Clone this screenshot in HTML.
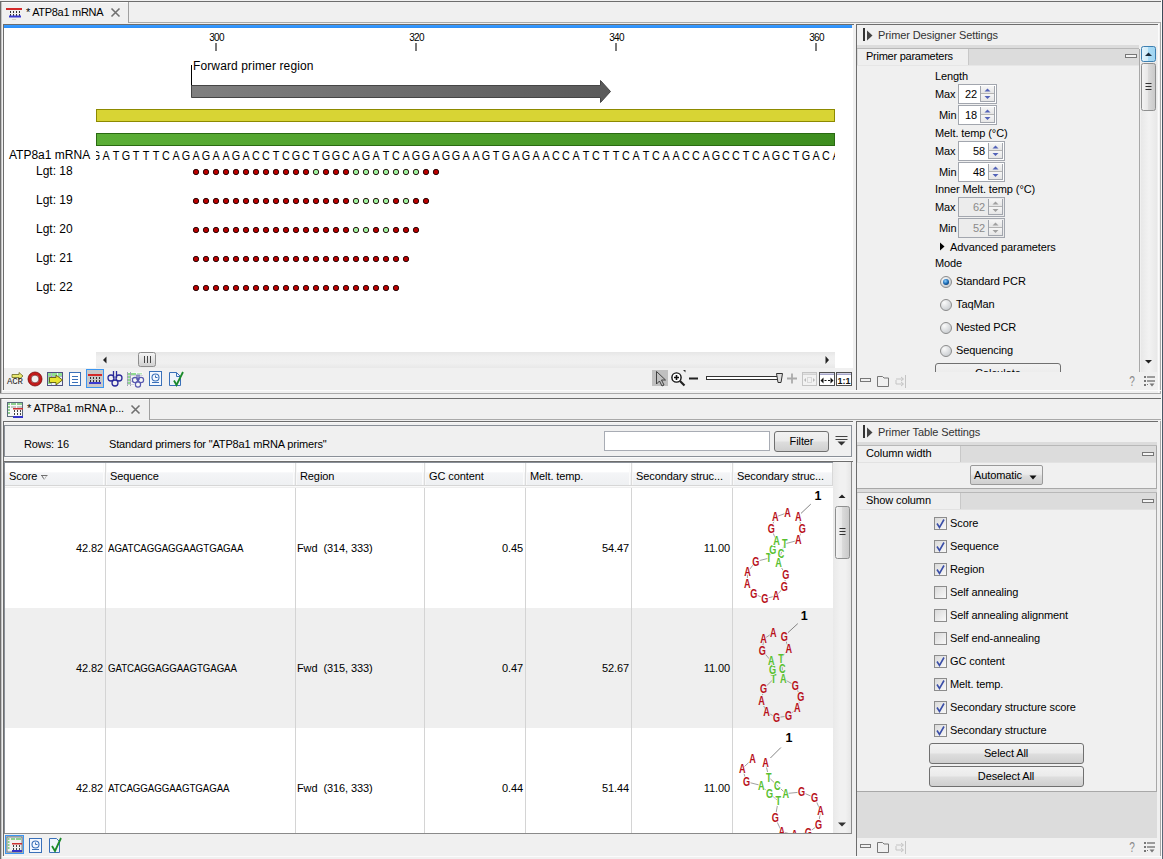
<!DOCTYPE html>
<html><head><meta charset="utf-8">
<style>
html,body{margin:0;padding:0}
body{width:1163px;height:859px;position:relative;overflow:hidden;background:#f0f0f0;font-family:"Liberation Sans", sans-serif}
.a{position:absolute}
.t{font-family:"Liberation Sans", sans-serif;line-height:1;white-space:pre}
svg{position:absolute;overflow:visible}
</style></head><body>
<div class="a" style="left:0px;top:1px;width:1161px;height:1px;background:#6d6d6d"></div>
<div class="a" style="left:0px;top:1px;width:1px;height:392px;background:#6d6d6d"></div>
<div class="a" style="left:1px;top:2px;width:1px;height:391px;background:#c4c4c4"></div>
<div class="a" style="left:1160px;top:22px;width:1px;height:371px;background:#a8a8a8"></div>
<div class="a" style="left:2px;top:2px;width:1159px;height:21px;background:#f0f0f0"></div>
<div class="a" style="left:129px;top:22px;width:1032px;height:1px;background:#a9a9a9"></div>
<div class="a" style="left:2px;top:2px;width:126px;height:22px;background:#f0f0f0"></div>
<div class="a" style="left:2px;top:2px;width:126px;height:1px;background:#fbfbfb"></div>
<div class="a" style="left:128px;top:2px;width:1px;height:21px;background:#a0a0a0"></div>
<div class="a" style="left:3px;top:24px;width:851px;height:1px;background:#6d6d6d"></div>
<div class="a" style="left:3px;top:24px;width:1px;height:366px;background:#6d6d6d"></div>
<div class="a" style="left:4px;top:25px;width:848px;height:3px;background:linear-gradient(#3a9cff,#2a8cf6)"></div>
<div class="a" style="left:4px;top:28px;width:849px;height:340px;background:#fff"></div>
<div class="a" style="left:856px;top:24px;width:302px;height:1px;background:#6d6d6d"></div>
<div class="a" style="left:856px;top:24px;width:1px;height:366px;background:#6d6d6d"></div>
<div class="a" style="left:1158px;top:24px;width:1px;height:369px;background:#fbfbfb"></div>
<div class="a" style="left:0px;top:393px;width:1162px;height:1px;background:#a9a9a9"></div>
<div class="a" style="left:2px;top:390px;width:1159px;height:1px;background:#fbfbfb"></div>
<div class="a" style="left:0px;top:398px;width:1161px;height:1px;background:#6d6d6d"></div>
<div class="a" style="left:0px;top:398px;width:1px;height:461px;background:#6d6d6d"></div>
<div class="a" style="left:1px;top:399px;width:1px;height:460px;background:#c4c4c4"></div>
<div class="a" style="left:1160px;top:419px;width:1px;height:438px;background:#a8a8a8"></div>
<div class="a" style="left:2px;top:399px;width:1159px;height:22px;background:#f0f0f0"></div>
<div class="a" style="left:2px;top:399px;width:147px;height:1px;background:#fbfbfb"></div>
<div class="a" style="left:149px;top:399px;width:1px;height:21px;background:#a0a0a0"></div>
<div class="a" style="left:150px;top:419px;width:1011px;height:1px;background:#a9a9a9"></div>
<div class="a" style="left:3px;top:421px;width:850px;height:1px;background:#6d6d6d"></div>
<div class="a" style="left:3px;top:421px;width:1px;height:435px;background:#6d6d6d"></div>
<div class="a" style="left:4px;top:422px;width:849px;height:1px;background:#f8f8f8"></div>
<div class="a" style="left:4px;top:425px;width:848px;height:1px;background:#8a9098"></div>
<div class="a" style="left:4px;top:425px;width:1px;height:32px;background:#8a9098"></div>
<div class="a" style="left:851px;top:425px;width:1px;height:32px;background:#8a9098"></div>
<div class="a" style="left:4px;top:456px;width:848px;height:1px;background:#8a9098"></div>
<div class="a" style="left:5px;top:457px;width:847px;height:1px;background:#fbfbfb"></div>
<div class="a" style="left:5px;top:460px;width:847px;height:1px;background:#fbfbfb"></div>
<div class="a" style="left:3px;top:461px;width:850px;height:1px;background:#6d6d6d"></div>
<div class="a" style="left:4px;top:462px;width:848px;height:1px;background:#8a9098"></div>
<div class="a" style="left:4px;top:462px;width:1px;height:372px;background:#8a9098"></div>
<div class="a" style="left:851px;top:462px;width:1px;height:372px;background:#8a8a8a"></div>
<div class="a" style="left:5px;top:463px;width:846px;height:370px;background:#fff"></div>
<div class="a" style="left:4px;top:833px;width:848px;height:1px;background:#8a8a8a"></div>
<div class="a" style="left:856px;top:421px;width:302px;height:1px;background:#6d6d6d"></div>
<div class="a" style="left:856px;top:421px;width:1px;height:435px;background:#6d6d6d"></div>
<div class="a" style="left:2px;top:856px;width:1159px;height:1px;background:#fbfbfb"></div>
<div class="a" style="left:1161px;top:0px;width:1px;height:859px;background:#fafafa"></div>
<div class="a" style="left:1162px;top:0px;width:1px;height:859px;background:linear-gradient(#3c4a58,#5a6878)"></div>
<svg style="left:5px;top:7px" width="18" height="14" viewBox="0 0 18 14">
<rect x="1" y="1" width="16" height="2" fill="#d42a2a"/>
<g fill="#333"><rect x="5" y="4" width="1" height="2"/><rect x="8" y="4" width="1" height="2"/><rect x="11" y="4" width="1" height="2"/><rect x="14" y="4" width="1" height="2"/>
<rect x="5" y="7" width="1" height="2"/><rect x="8" y="7" width="1" height="2"/><rect x="11" y="7" width="1" height="2"/><rect x="14" y="7" width="1" height="2"/></g>
<rect x="4" y="8.5" width="12" height="2" fill="#3a3ad0"/>
<rect x="7" y="12" width="4" height="1" fill="#d8d0c8"/>
</svg>
<div class="a t" style="top:6.69px;font-size:11px;color:#000;letter-spacing:-0.3px;left:26px;">* ATP8a1 mRNA</div>
<svg style="left:111px;top:8px" width="9" height="9" viewBox="0 0 9 9">
<path d="M0.5 0.5L8.5 8.5M8.5 0.5L0.5 8.5" stroke="#707070" stroke-width="1.6"/></svg>
<div class="a t" style="top:32.53px;font-size:10px;color:#000;letter-spacing:-0.7px;left:216.5px;transform:translateX(-50%);">300</div>
<div class="a" style="left:215px;top:43px;width:2px;height:8px;background:#7a7a7a"></div>
<div class="a t" style="top:32.53px;font-size:10px;color:#000;letter-spacing:-0.7px;left:416.5px;transform:translateX(-50%);">320</div>
<div class="a" style="left:415px;top:43px;width:2px;height:8px;background:#7a7a7a"></div>
<div class="a t" style="top:32.53px;font-size:10px;color:#000;letter-spacing:-0.7px;left:616.5px;transform:translateX(-50%);">340</div>
<div class="a" style="left:615px;top:43px;width:2px;height:8px;background:#7a7a7a"></div>
<div class="a t" style="top:32.53px;font-size:10px;color:#000;letter-spacing:-0.7px;left:816.5px;transform:translateX(-50%);">360</div>
<div class="a" style="left:815px;top:43px;width:2px;height:8px;background:#7a7a7a"></div>
<div class="a t" style="top:59.84px;font-size:12px;color:#000;letter-spacing:0.12px;left:193px;">Forward primer region</div>
<div class="a" style="left:191px;top:65px;width:1px;height:21px;background:#000"></div>
<svg style="left:190px;top:79px" width="24" height="26" viewBox="0 0 24 26"></svg>
<svg style="left:0;top:0" width="1163" height="400">
<defs><linearGradient id="ag" x1="0" x2="1" y1="0" y2="0"><stop offset="0" stop-color="#808080"/><stop offset="1" stop-color="#5a5a5a"/></linearGradient>
<linearGradient id="gg" x1="0" x2="1" y1="0" y2="0"><stop offset="0" stop-color="#5bae36"/><stop offset="1" stop-color="#3e8e1f"/></linearGradient></defs>
<path d="M191.5 85.5H600.5V80.5L610.5 91.5L600.5 102.5V97.5H191.5Z" fill="url(#ag)" stroke="#454545" stroke-width="1"/>
<rect x="96.5" y="109.5" width="738" height="12" fill="#d8d434" stroke="#8d8a00"/>
<rect x="96.5" y="133.5" width="738" height="12" fill="url(#gg)" stroke="#2a6a12"/>
</svg>
<div class="a t" style="top:148.84px;font-size:12px;color:#000;left:9px;">ATP8a1 mRNA</div>
<div class="a t" style="left:0;top:149.84px;width:1163px;height:16px;font-size:12px;"><div style="position:absolute;left:96px;top:0;width:739px;height:16px;overflow:hidden"><div style="position:absolute;left:-96px;top:0"><span style="position:absolute;left:96px;transform:translateX(-50%) scaleX(0.9)">G</span><span style="position:absolute;left:106px;transform:translateX(-50%) scaleX(0.9)">A</span><span style="position:absolute;left:116px;transform:translateX(-50%) scaleX(0.9)">T</span><span style="position:absolute;left:126px;transform:translateX(-50%) scaleX(0.9)">G</span><span style="position:absolute;left:136px;transform:translateX(-50%) scaleX(0.9)">T</span><span style="position:absolute;left:146px;transform:translateX(-50%) scaleX(0.9)">T</span><span style="position:absolute;left:156px;transform:translateX(-50%) scaleX(0.9)">T</span><span style="position:absolute;left:166px;transform:translateX(-50%) scaleX(0.9)">C</span><span style="position:absolute;left:176px;transform:translateX(-50%) scaleX(0.9)">A</span><span style="position:absolute;left:186px;transform:translateX(-50%) scaleX(0.9)">G</span><span style="position:absolute;left:196px;transform:translateX(-50%) scaleX(0.9)">A</span><span style="position:absolute;left:206px;transform:translateX(-50%) scaleX(0.9)">G</span><span style="position:absolute;left:216px;transform:translateX(-50%) scaleX(0.9)">A</span><span style="position:absolute;left:226px;transform:translateX(-50%) scaleX(0.9)">A</span><span style="position:absolute;left:236px;transform:translateX(-50%) scaleX(0.9)">G</span><span style="position:absolute;left:246px;transform:translateX(-50%) scaleX(0.9)">A</span><span style="position:absolute;left:256px;transform:translateX(-50%) scaleX(0.9)">C</span><span style="position:absolute;left:266px;transform:translateX(-50%) scaleX(0.9)">C</span><span style="position:absolute;left:276px;transform:translateX(-50%) scaleX(0.9)">T</span><span style="position:absolute;left:286px;transform:translateX(-50%) scaleX(0.9)">C</span><span style="position:absolute;left:296px;transform:translateX(-50%) scaleX(0.9)">G</span><span style="position:absolute;left:306px;transform:translateX(-50%) scaleX(0.9)">C</span><span style="position:absolute;left:316px;transform:translateX(-50%) scaleX(0.9)">T</span><span style="position:absolute;left:326px;transform:translateX(-50%) scaleX(0.9)">G</span><span style="position:absolute;left:336px;transform:translateX(-50%) scaleX(0.9)">G</span><span style="position:absolute;left:346px;transform:translateX(-50%) scaleX(0.9)">C</span><span style="position:absolute;left:356px;transform:translateX(-50%) scaleX(0.9)">A</span><span style="position:absolute;left:366px;transform:translateX(-50%) scaleX(0.9)">G</span><span style="position:absolute;left:376px;transform:translateX(-50%) scaleX(0.9)">A</span><span style="position:absolute;left:386px;transform:translateX(-50%) scaleX(0.9)">T</span><span style="position:absolute;left:396px;transform:translateX(-50%) scaleX(0.9)">C</span><span style="position:absolute;left:406px;transform:translateX(-50%) scaleX(0.9)">A</span><span style="position:absolute;left:416px;transform:translateX(-50%) scaleX(0.9)">G</span><span style="position:absolute;left:426px;transform:translateX(-50%) scaleX(0.9)">G</span><span style="position:absolute;left:436px;transform:translateX(-50%) scaleX(0.9)">A</span><span style="position:absolute;left:446px;transform:translateX(-50%) scaleX(0.9)">G</span><span style="position:absolute;left:456px;transform:translateX(-50%) scaleX(0.9)">G</span><span style="position:absolute;left:466px;transform:translateX(-50%) scaleX(0.9)">A</span><span style="position:absolute;left:476px;transform:translateX(-50%) scaleX(0.9)">A</span><span style="position:absolute;left:486px;transform:translateX(-50%) scaleX(0.9)">G</span><span style="position:absolute;left:496px;transform:translateX(-50%) scaleX(0.9)">T</span><span style="position:absolute;left:506px;transform:translateX(-50%) scaleX(0.9)">G</span><span style="position:absolute;left:516px;transform:translateX(-50%) scaleX(0.9)">A</span><span style="position:absolute;left:526px;transform:translateX(-50%) scaleX(0.9)">G</span><span style="position:absolute;left:536px;transform:translateX(-50%) scaleX(0.9)">A</span><span style="position:absolute;left:546px;transform:translateX(-50%) scaleX(0.9)">A</span><span style="position:absolute;left:556px;transform:translateX(-50%) scaleX(0.9)">C</span><span style="position:absolute;left:566px;transform:translateX(-50%) scaleX(0.9)">C</span><span style="position:absolute;left:576px;transform:translateX(-50%) scaleX(0.9)">A</span><span style="position:absolute;left:586px;transform:translateX(-50%) scaleX(0.9)">T</span><span style="position:absolute;left:596px;transform:translateX(-50%) scaleX(0.9)">C</span><span style="position:absolute;left:606px;transform:translateX(-50%) scaleX(0.9)">T</span><span style="position:absolute;left:616px;transform:translateX(-50%) scaleX(0.9)">T</span><span style="position:absolute;left:626px;transform:translateX(-50%) scaleX(0.9)">C</span><span style="position:absolute;left:636px;transform:translateX(-50%) scaleX(0.9)">A</span><span style="position:absolute;left:646px;transform:translateX(-50%) scaleX(0.9)">T</span><span style="position:absolute;left:656px;transform:translateX(-50%) scaleX(0.9)">C</span><span style="position:absolute;left:666px;transform:translateX(-50%) scaleX(0.9)">A</span><span style="position:absolute;left:676px;transform:translateX(-50%) scaleX(0.9)">A</span><span style="position:absolute;left:686px;transform:translateX(-50%) scaleX(0.9)">C</span><span style="position:absolute;left:696px;transform:translateX(-50%) scaleX(0.9)">C</span><span style="position:absolute;left:706px;transform:translateX(-50%) scaleX(0.9)">A</span><span style="position:absolute;left:716px;transform:translateX(-50%) scaleX(0.9)">G</span><span style="position:absolute;left:726px;transform:translateX(-50%) scaleX(0.9)">C</span><span style="position:absolute;left:736px;transform:translateX(-50%) scaleX(0.9)">C</span><span style="position:absolute;left:746px;transform:translateX(-50%) scaleX(0.9)">T</span><span style="position:absolute;left:756px;transform:translateX(-50%) scaleX(0.9)">C</span><span style="position:absolute;left:766px;transform:translateX(-50%) scaleX(0.9)">A</span><span style="position:absolute;left:776px;transform:translateX(-50%) scaleX(0.9)">G</span><span style="position:absolute;left:786px;transform:translateX(-50%) scaleX(0.9)">C</span><span style="position:absolute;left:796px;transform:translateX(-50%) scaleX(0.9)">T</span><span style="position:absolute;left:806px;transform:translateX(-50%) scaleX(0.9)">G</span><span style="position:absolute;left:816px;transform:translateX(-50%) scaleX(0.9)">A</span><span style="position:absolute;left:826px;transform:translateX(-50%) scaleX(0.9)">C</span><span style="position:absolute;left:836px;transform:translateX(-50%) scaleX(0.9)">A</span></div></div></div>
<div class="a t" style="top:164.84px;font-size:12px;color:#000;left:36px;">Lgt: 18</div>
<div class="a t" style="top:193.84px;font-size:12px;color:#000;left:36px;">Lgt: 19</div>
<div class="a t" style="top:222.84px;font-size:12px;color:#000;left:36px;">Lgt: 20</div>
<div class="a t" style="top:251.84px;font-size:12px;color:#000;left:36px;">Lgt: 21</div>
<div class="a t" style="top:280.84px;font-size:12px;color:#000;left:36px;">Lgt: 22</div>
<svg style="left:0;top:0" width="1163" height="400"><circle cx="196" cy="172" r="2.7" fill="#b80000" stroke="#1a0000" stroke-width="0.9"/><circle cx="206" cy="172" r="2.7" fill="#b80000" stroke="#1a0000" stroke-width="0.9"/><circle cx="216" cy="172" r="2.7" fill="#b80000" stroke="#1a0000" stroke-width="0.9"/><circle cx="226" cy="172" r="2.7" fill="#b80000" stroke="#1a0000" stroke-width="0.9"/><circle cx="236" cy="172" r="2.7" fill="#b80000" stroke="#1a0000" stroke-width="0.9"/><circle cx="246" cy="172" r="2.7" fill="#b80000" stroke="#1a0000" stroke-width="0.9"/><circle cx="256" cy="172" r="2.7" fill="#b80000" stroke="#1a0000" stroke-width="0.9"/><circle cx="266" cy="172" r="2.7" fill="#b80000" stroke="#1a0000" stroke-width="0.9"/><circle cx="276" cy="172" r="2.7" fill="#b80000" stroke="#1a0000" stroke-width="0.9"/><circle cx="286" cy="172" r="2.7" fill="#b80000" stroke="#1a0000" stroke-width="0.9"/><circle cx="296" cy="172" r="2.7" fill="#b80000" stroke="#1a0000" stroke-width="0.9"/><circle cx="306" cy="172" r="2.7" fill="#b80000" stroke="#1a0000" stroke-width="0.9"/><circle cx="316" cy="172" r="2.7" fill="#9ef09e" stroke="#1a0000" stroke-width="0.9"/><circle cx="326" cy="172" r="2.7" fill="#b80000" stroke="#1a0000" stroke-width="0.9"/><circle cx="336" cy="172" r="2.7" fill="#b80000" stroke="#1a0000" stroke-width="0.9"/><circle cx="346" cy="172" r="2.7" fill="#b80000" stroke="#1a0000" stroke-width="0.9"/><circle cx="356" cy="172" r="2.7" fill="#9ef09e" stroke="#1a0000" stroke-width="0.9"/><circle cx="366" cy="172" r="2.7" fill="#9ef09e" stroke="#1a0000" stroke-width="0.9"/><circle cx="376" cy="172" r="2.7" fill="#9ef09e" stroke="#1a0000" stroke-width="0.9"/><circle cx="386" cy="172" r="2.7" fill="#9ef09e" stroke="#1a0000" stroke-width="0.9"/><circle cx="396" cy="172" r="2.7" fill="#9ef09e" stroke="#1a0000" stroke-width="0.9"/><circle cx="406" cy="172" r="2.7" fill="#9ef09e" stroke="#1a0000" stroke-width="0.9"/><circle cx="416" cy="172" r="2.7" fill="#9ef09e" stroke="#1a0000" stroke-width="0.9"/><circle cx="426" cy="172" r="2.7" fill="#b80000" stroke="#1a0000" stroke-width="0.9"/><circle cx="436" cy="172" r="2.7" fill="#b80000" stroke="#1a0000" stroke-width="0.9"/><circle cx="196" cy="201" r="2.7" fill="#b80000" stroke="#1a0000" stroke-width="0.9"/><circle cx="206" cy="201" r="2.7" fill="#b80000" stroke="#1a0000" stroke-width="0.9"/><circle cx="216" cy="201" r="2.7" fill="#b80000" stroke="#1a0000" stroke-width="0.9"/><circle cx="226" cy="201" r="2.7" fill="#b80000" stroke="#1a0000" stroke-width="0.9"/><circle cx="236" cy="201" r="2.7" fill="#b80000" stroke="#1a0000" stroke-width="0.9"/><circle cx="246" cy="201" r="2.7" fill="#b80000" stroke="#1a0000" stroke-width="0.9"/><circle cx="256" cy="201" r="2.7" fill="#b80000" stroke="#1a0000" stroke-width="0.9"/><circle cx="266" cy="201" r="2.7" fill="#b80000" stroke="#1a0000" stroke-width="0.9"/><circle cx="276" cy="201" r="2.7" fill="#b80000" stroke="#1a0000" stroke-width="0.9"/><circle cx="286" cy="201" r="2.7" fill="#b80000" stroke="#1a0000" stroke-width="0.9"/><circle cx="296" cy="201" r="2.7" fill="#b80000" stroke="#1a0000" stroke-width="0.9"/><circle cx="306" cy="201" r="2.7" fill="#b80000" stroke="#1a0000" stroke-width="0.9"/><circle cx="316" cy="201" r="2.7" fill="#b80000" stroke="#1a0000" stroke-width="0.9"/><circle cx="326" cy="201" r="2.7" fill="#b80000" stroke="#1a0000" stroke-width="0.9"/><circle cx="336" cy="201" r="2.7" fill="#b80000" stroke="#1a0000" stroke-width="0.9"/><circle cx="346" cy="201" r="2.7" fill="#b80000" stroke="#1a0000" stroke-width="0.9"/><circle cx="356" cy="201" r="2.7" fill="#9ef09e" stroke="#1a0000" stroke-width="0.9"/><circle cx="366" cy="201" r="2.7" fill="#9ef09e" stroke="#1a0000" stroke-width="0.9"/><circle cx="376" cy="201" r="2.7" fill="#9ef09e" stroke="#1a0000" stroke-width="0.9"/><circle cx="386" cy="201" r="2.7" fill="#9ef09e" stroke="#1a0000" stroke-width="0.9"/><circle cx="396" cy="201" r="2.7" fill="#b80000" stroke="#1a0000" stroke-width="0.9"/><circle cx="406" cy="201" r="2.7" fill="#9ef09e" stroke="#1a0000" stroke-width="0.9"/><circle cx="416" cy="201" r="2.7" fill="#b80000" stroke="#1a0000" stroke-width="0.9"/><circle cx="426" cy="201" r="2.7" fill="#b80000" stroke="#1a0000" stroke-width="0.9"/><circle cx="196" cy="230" r="2.7" fill="#b80000" stroke="#1a0000" stroke-width="0.9"/><circle cx="206" cy="230" r="2.7" fill="#b80000" stroke="#1a0000" stroke-width="0.9"/><circle cx="216" cy="230" r="2.7" fill="#b80000" stroke="#1a0000" stroke-width="0.9"/><circle cx="226" cy="230" r="2.7" fill="#b80000" stroke="#1a0000" stroke-width="0.9"/><circle cx="236" cy="230" r="2.7" fill="#b80000" stroke="#1a0000" stroke-width="0.9"/><circle cx="246" cy="230" r="2.7" fill="#b80000" stroke="#1a0000" stroke-width="0.9"/><circle cx="256" cy="230" r="2.7" fill="#b80000" stroke="#1a0000" stroke-width="0.9"/><circle cx="266" cy="230" r="2.7" fill="#b80000" stroke="#1a0000" stroke-width="0.9"/><circle cx="276" cy="230" r="2.7" fill="#b80000" stroke="#1a0000" stroke-width="0.9"/><circle cx="286" cy="230" r="2.7" fill="#b80000" stroke="#1a0000" stroke-width="0.9"/><circle cx="296" cy="230" r="2.7" fill="#b80000" stroke="#1a0000" stroke-width="0.9"/><circle cx="306" cy="230" r="2.7" fill="#b80000" stroke="#1a0000" stroke-width="0.9"/><circle cx="316" cy="230" r="2.7" fill="#b80000" stroke="#1a0000" stroke-width="0.9"/><circle cx="326" cy="230" r="2.7" fill="#b80000" stroke="#1a0000" stroke-width="0.9"/><circle cx="336" cy="230" r="2.7" fill="#b80000" stroke="#1a0000" stroke-width="0.9"/><circle cx="346" cy="230" r="2.7" fill="#b80000" stroke="#1a0000" stroke-width="0.9"/><circle cx="356" cy="230" r="2.7" fill="#9ef09e" stroke="#1a0000" stroke-width="0.9"/><circle cx="366" cy="230" r="2.7" fill="#9ef09e" stroke="#1a0000" stroke-width="0.9"/><circle cx="376" cy="230" r="2.7" fill="#b80000" stroke="#1a0000" stroke-width="0.9"/><circle cx="386" cy="230" r="2.7" fill="#9ef09e" stroke="#1a0000" stroke-width="0.9"/><circle cx="396" cy="230" r="2.7" fill="#b80000" stroke="#1a0000" stroke-width="0.9"/><circle cx="406" cy="230" r="2.7" fill="#b80000" stroke="#1a0000" stroke-width="0.9"/><circle cx="416" cy="230" r="2.7" fill="#b80000" stroke="#1a0000" stroke-width="0.9"/><circle cx="196" cy="259" r="2.7" fill="#b80000" stroke="#1a0000" stroke-width="0.9"/><circle cx="206" cy="259" r="2.7" fill="#b80000" stroke="#1a0000" stroke-width="0.9"/><circle cx="216" cy="259" r="2.7" fill="#b80000" stroke="#1a0000" stroke-width="0.9"/><circle cx="226" cy="259" r="2.7" fill="#b80000" stroke="#1a0000" stroke-width="0.9"/><circle cx="236" cy="259" r="2.7" fill="#b80000" stroke="#1a0000" stroke-width="0.9"/><circle cx="246" cy="259" r="2.7" fill="#b80000" stroke="#1a0000" stroke-width="0.9"/><circle cx="256" cy="259" r="2.7" fill="#b80000" stroke="#1a0000" stroke-width="0.9"/><circle cx="266" cy="259" r="2.7" fill="#b80000" stroke="#1a0000" stroke-width="0.9"/><circle cx="276" cy="259" r="2.7" fill="#b80000" stroke="#1a0000" stroke-width="0.9"/><circle cx="286" cy="259" r="2.7" fill="#b80000" stroke="#1a0000" stroke-width="0.9"/><circle cx="296" cy="259" r="2.7" fill="#b80000" stroke="#1a0000" stroke-width="0.9"/><circle cx="306" cy="259" r="2.7" fill="#b80000" stroke="#1a0000" stroke-width="0.9"/><circle cx="316" cy="259" r="2.7" fill="#b80000" stroke="#1a0000" stroke-width="0.9"/><circle cx="326" cy="259" r="2.7" fill="#b80000" stroke="#1a0000" stroke-width="0.9"/><circle cx="336" cy="259" r="2.7" fill="#b80000" stroke="#1a0000" stroke-width="0.9"/><circle cx="346" cy="259" r="2.7" fill="#b80000" stroke="#1a0000" stroke-width="0.9"/><circle cx="356" cy="259" r="2.7" fill="#b80000" stroke="#1a0000" stroke-width="0.9"/><circle cx="366" cy="259" r="2.7" fill="#b80000" stroke="#1a0000" stroke-width="0.9"/><circle cx="376" cy="259" r="2.7" fill="#b80000" stroke="#1a0000" stroke-width="0.9"/><circle cx="386" cy="259" r="2.7" fill="#b80000" stroke="#1a0000" stroke-width="0.9"/><circle cx="396" cy="259" r="2.7" fill="#b80000" stroke="#1a0000" stroke-width="0.9"/><circle cx="406" cy="259" r="2.7" fill="#b80000" stroke="#1a0000" stroke-width="0.9"/><circle cx="196" cy="288" r="2.7" fill="#b80000" stroke="#1a0000" stroke-width="0.9"/><circle cx="206" cy="288" r="2.7" fill="#b80000" stroke="#1a0000" stroke-width="0.9"/><circle cx="216" cy="288" r="2.7" fill="#b80000" stroke="#1a0000" stroke-width="0.9"/><circle cx="226" cy="288" r="2.7" fill="#b80000" stroke="#1a0000" stroke-width="0.9"/><circle cx="236" cy="288" r="2.7" fill="#b80000" stroke="#1a0000" stroke-width="0.9"/><circle cx="246" cy="288" r="2.7" fill="#b80000" stroke="#1a0000" stroke-width="0.9"/><circle cx="256" cy="288" r="2.7" fill="#b80000" stroke="#1a0000" stroke-width="0.9"/><circle cx="266" cy="288" r="2.7" fill="#b80000" stroke="#1a0000" stroke-width="0.9"/><circle cx="276" cy="288" r="2.7" fill="#b80000" stroke="#1a0000" stroke-width="0.9"/><circle cx="286" cy="288" r="2.7" fill="#b80000" stroke="#1a0000" stroke-width="0.9"/><circle cx="296" cy="288" r="2.7" fill="#b80000" stroke="#1a0000" stroke-width="0.9"/><circle cx="306" cy="288" r="2.7" fill="#b80000" stroke="#1a0000" stroke-width="0.9"/><circle cx="316" cy="288" r="2.7" fill="#b80000" stroke="#1a0000" stroke-width="0.9"/><circle cx="326" cy="288" r="2.7" fill="#b80000" stroke="#1a0000" stroke-width="0.9"/><circle cx="336" cy="288" r="2.7" fill="#b80000" stroke="#1a0000" stroke-width="0.9"/><circle cx="346" cy="288" r="2.7" fill="#b80000" stroke="#1a0000" stroke-width="0.9"/><circle cx="356" cy="288" r="2.7" fill="#b80000" stroke="#1a0000" stroke-width="0.9"/><circle cx="366" cy="288" r="2.7" fill="#b80000" stroke="#1a0000" stroke-width="0.9"/><circle cx="376" cy="288" r="2.7" fill="#b80000" stroke="#1a0000" stroke-width="0.9"/><circle cx="386" cy="288" r="2.7" fill="#b80000" stroke="#1a0000" stroke-width="0.9"/><circle cx="396" cy="288" r="2.7" fill="#b80000" stroke="#1a0000" stroke-width="0.9"/></svg>
<div class="a" style="left:96px;top:352px;width:739px;height:16px;background:linear-gradient(#e6e6e6,#efefef 30%,#f0f0f0 70%,#e8e8e8)"></div>
<svg style="left:96px;top:352px" width="740" height="16" viewBox="0 0 740 16">
<path d="M7 8L10.5 4.5V11.5Z" fill="#222"/>
<path d="M733 8L729.5 4V12Z" fill="#222"/>
<rect x="42.5" y="0.5" width="17" height="14" rx="2" fill="url(#thg)" stroke="#8e8e8e"/>
<defs><linearGradient id="thg" x1="0" x2="0" y1="0" y2="1"><stop offset="0" stop-color="#f4f4f4"/><stop offset="0.5" stop-color="#e4e4e4"/><stop offset="1" stop-color="#cfcfcf"/></linearGradient></defs>
<g fill="#444"><rect x="48" y="4" width="1" height="7"/><rect x="51" y="4" width="1" height="7"/><rect x="54" y="4" width="1" height="7"/></g>
</svg>
<svg style="left:4px;top:368px" width="200" height="22" viewBox="0 0 200 22">
<path d="M8 6.5H15V4.5L19 8L15 11.5V9.5H8Z" fill="#e8e870" stroke="#6a6a20" stroke-width="0.8"/>
<text x="3" y="16" font-family="Liberation Mono" font-size="9" fill="#222" letter-spacing="-0.2">ACR</text>
<circle cx="31" cy="11" r="5.6" fill="none" stroke="#c41a1a" stroke-width="3"/>
<circle cx="31" cy="11" r="7" fill="none" stroke="#7a1010" stroke-width="0.8"/>
<circle cx="31" cy="11" r="3.9" fill="none" stroke="#6a1010" stroke-width="0.7"/>
<rect x="43.5" y="4.5" width="15" height="13" fill="#eef4fa" stroke="#505080"/>
<g fill="#90e090"><rect x="44" y="5" width="3" height="3"/><rect x="48" y="5" width="5" height="3"/><rect x="54" y="5" width="4" height="3"/><rect x="44" y="9" width="3" height="3"/><rect x="44" y="13" width="3" height="3"/></g>
<path d="M44 8.5H58M44 12.5H58M47.5 5V17" stroke="#8888aa" stroke-width="0.6"/>
<path d="M45.5 9.5H52V7L58.5 12L52 17V14.5H45.5Z" fill="#e8e430" stroke="#5a5a10" stroke-width="0.9"/>
<rect x="65.5" y="4.5" width="11" height="13" fill="#fff" stroke="#3a70b8"/>
<g stroke="#3a70b8"><path d="M68 8.5H74M68 11.5H74M68 14.5H74"/></g>
<rect x="82.5" y="1.5" width="17" height="18" fill="#c8c8c8" stroke="#3c96f0"/>
<rect x="84" y="6" width="14" height="2" fill="#d42a2a"/>
<g fill="#333"><rect x="86" y="9" width="1" height="2"/><rect x="89" y="9" width="1" height="2"/><rect x="92" y="9" width="1" height="2"/><rect x="95" y="9" width="1" height="2"/><rect x="86" y="12" width="1" height="2"/><rect x="89" y="12" width="1" height="2"/><rect x="92" y="12" width="1" height="2"/><rect x="95" y="12" width="1" height="2"/></g>
<rect x="85" y="14" width="12" height="2" fill="#3a3ad0"/>
<g fill="none" stroke="#2a2a9a" stroke-width="1.3"><circle cx="107" cy="10" r="3"/><circle cx="115" cy="10" r="3"/><circle cx="111" cy="15" r="3"/><path d="M109.5 3V10M112.5 3V10"/></g>
<rect x="123" y="4" width="16" height="14" fill="#f6f8f6"/>
<g fill="#8fd88f"><rect x="124" y="5" width="2" height="2"/><rect x="124" y="8" width="2" height="2"/><rect x="124" y="11" width="2" height="2"/><rect x="124" y="14" width="2" height="2"/><rect x="127" y="5" width="5" height="2"/><rect x="133" y="5" width="5" height="1.5" opacity="0.6"/></g>
<path d="M123.5 4V18M126.5 4V18" stroke="#7a7a9a" stroke-width="0.7"/><path d="M123 7.5H139M123 10.5H133M123 13.5H130M123 16.5H130" stroke="#c0c0d0" stroke-width="0.7"/>
<g fill="none" stroke="#5a5ab0" stroke-width="1.2"><circle cx="131" cy="12" r="2.6"/><circle cx="137" cy="12" r="2.6"/><circle cx="134" cy="16.5" r="2.6"/><path d="M133 6.5V12M135 6.5V12"/></g>
<rect x="145.5" y="3.5" width="12" height="14" fill="#f4f8ff" stroke="#3a70b8"/>
<circle cx="151.5" cy="9.5" r="3.5" fill="none" stroke="#3a70b8" stroke-width="1.1"/><path d="M151.5 7.5V9.5H153.5" fill="none" stroke="#3a70b8"/>
<path d="M148 14.5H155" stroke="#3a70b8"/>
<path d="M165.5 4.5H172.5L176.5 8.5V17.5H165.5Z" fill="#eef4fb" stroke="#3a70b8"/><path d="M172.5 4.5V8.5H176.5" fill="none" stroke="#3a70b8"/>
<path d="M170 12.5L172.5 17L179 4" fill="none" stroke="#1a8a2a" stroke-width="1.8"/>
</svg>
<svg style="left:650px;top:368px" width="205" height="22" viewBox="0 0 205 22">
<rect x="2" y="2" width="16" height="16" fill="#c0c0c0"/>
<path d="M6.5 3.5V16L9.5 13L12 18L14 17L11.5 12H15.5Z" fill="none" stroke="#333" stroke-width="0.9"/>
<circle cx="26.5" cy="9.5" r="4.6" fill="#fff" stroke="#111" stroke-width="1.4"/>
<path d="M24 9.5H29M26.5 7V12" stroke="#111" stroke-width="1.6"/>
<path d="M30 13L34.5 17.5" stroke="#222" stroke-width="2.2"/>
<path d="M33 2H35.5V4.5Z" fill="#333"/>
<path d="M39 10.5H48" stroke="#222" stroke-width="2"/>
<rect x="56.5" y="8.5" width="74" height="3" fill="#fff" stroke="#333"/>
<path d="M126.5 5.5H132.5L131 14.5H128Z" fill="#ddd" stroke="#333"/>
<path d="M137 10.5H147M142 5.5V15.5" stroke="#aaa" stroke-width="1.8"/>
<rect x="152.5" y="4.5" width="14" height="13" fill="#f2f2f2" stroke="#c4c4c4"/><path d="M153 6.2H166" stroke="#d0d0d0" stroke-width="1.4"/>
<path d="M154 12L156 10V14Z M165 12L163 10V14Z" fill="#b8b8b8"/><rect x="157.5" y="9.5" width="4" height="5" fill="none" stroke="#c0c0c0" stroke-dasharray="1 1"/>
<rect x="169.5" y="4.5" width="15" height="13" fill="#fff" stroke="#505050"/><path d="M170 6.2H184" stroke="#9c9cc4" stroke-width="1.4"/>
<path d="M170.5 12.5L173.5 9.5V15.5Z M183.5 12.5L180.5 9.5V15.5Z" fill="#111"/><path d="M174.5 12.5H176.5M178 12.5H180" stroke="#111" stroke-width="1.1"/>
<rect x="186.5" y="4.5" width="15" height="13" fill="#fff" stroke="#505050"/><path d="M187 6.2H201" stroke="#9c9cc4" stroke-width="1.4"/>
<text x="194" y="16" text-anchor="middle" font-family="Liberation Sans" font-weight="bold" font-size="9" fill="#111">1:1</text>
</svg>
<div class="a" style="left:857px;top:25px;width:301px;height:20px;background:#f0f0f0"></div>
<div class="a" style="left:863px;top:28px;width:2px;height:13px;background:#333"></div>
<svg style="left:866px;top:30px" width="8" height="12" viewBox="0 0 8 12"><path d="M1 0.5L6.5 5.5L1 10.5Z" fill="#444"/></svg>
<div class="a t" style="top:29.69px;font-size:11px;color:#333;letter-spacing:-0.1px;left:878px;">Primer Designer Settings</div>
<div class="a" style="left:857px;top:45px;width:282px;height:4px;background:#dcdcdc"></div>
<div class="a" style="left:857px;top:48px;width:282px;height:1px;background:#b8b8b8"></div>
<div class="a" style="left:857px;top:49px;width:282px;height:16px;background:#dcdcdc"></div>
<div class="a" style="left:858px;top:49px;width:110px;height:16px;background:#efefef"></div>
<div class="a" style="left:968px;top:49px;width:1px;height:16px;background:#c8c8c8"></div>
<div class="a" style="left:857px;top:65px;width:283px;height:1px;background:#e6e6e6"></div>
<div class="a t" style="top:51.19px;font-size:11px;color:#000;letter-spacing:-0.25px;left:866px;">Primer parameters</div>
<svg style="left:1124px;top:54px" width="14" height="5" viewBox="0 0 14 5"><rect x="1.5" y="0.5" width="11" height="3" fill="#f4f4f4" stroke="#777"/></svg>
<div class="a" style="left:1139px;top:49px;width:1px;height:323px;background:#a8a8a8"></div>
<div class="a t" style="top:70.69px;font-size:11px;color:#000;letter-spacing:-0.1px;left:935px;">Length</div>
<div class="a t" style="top:88.69px;font-size:11px;color:#000;letter-spacing:-0.1px;left:935px;">Max</div>
<div class="a" style="left:958px;top:84px;width:39px;height:20px;background:#fff;border:1px solid #a2a6ae;box-sizing:border-box"></div>
<div class="a" style="left:980px;top:86px;width:1px;height:16px;background:#a2a6ae"></div>
<div class="a" style="left:994px;top:86px;width:1px;height:16px;background:#a2a6ae"></div>
<div class="a" style="left:981px;top:86px;width:13px;height:7px;background:linear-gradient(#f6f6f6,#e6e6e6)"></div>
<div class="a" style="left:981px;top:93px;width:13px;height:1px;background:#b4b4b4"></div>
<div class="a" style="left:981px;top:94px;width:13px;height:7px;background:linear-gradient(#f6f6f6,#e6e6e6)"></div>
<div class="a" style="left:980px;top:101px;width:15px;height:1px;background:#a2a6ae"></div>
<svg style="left:981px;top:86px" width="13" height="15" viewBox="0 0 13 15"><path d="M3.5 5.5L6.5 2.5L9.5 5.5Z" fill="#5262b8"/><path d="M3.5 10L6.5 13L9.5 10Z" fill="#5262b8"/></svg>
<div class="a t" style="top:88.69px;font-size:11px;color:#000;letter-spacing:-0.1px;right:186px;text-align:right;">22</div>
<div class="a t" style="top:109.69px;font-size:11px;color:#000;letter-spacing:-0.1px;left:939px;">Min</div>
<div class="a" style="left:958px;top:105px;width:39px;height:20px;background:#fff;border:1px solid #a2a6ae;box-sizing:border-box"></div>
<div class="a" style="left:980px;top:107px;width:1px;height:16px;background:#a2a6ae"></div>
<div class="a" style="left:994px;top:107px;width:1px;height:16px;background:#a2a6ae"></div>
<div class="a" style="left:981px;top:107px;width:13px;height:7px;background:linear-gradient(#f6f6f6,#e6e6e6)"></div>
<div class="a" style="left:981px;top:114px;width:13px;height:1px;background:#b4b4b4"></div>
<div class="a" style="left:981px;top:115px;width:13px;height:7px;background:linear-gradient(#f6f6f6,#e6e6e6)"></div>
<div class="a" style="left:980px;top:122px;width:15px;height:1px;background:#a2a6ae"></div>
<svg style="left:981px;top:107px" width="13" height="15" viewBox="0 0 13 15"><path d="M3.5 5.5L6.5 2.5L9.5 5.5Z" fill="#5262b8"/><path d="M3.5 10L6.5 13L9.5 10Z" fill="#5262b8"/></svg>
<div class="a t" style="top:109.69px;font-size:11px;color:#000;letter-spacing:-0.1px;right:186px;text-align:right;">18</div>
<div class="a t" style="top:127.69px;font-size:11px;color:#000;letter-spacing:-0.1px;left:935px;">Melt. temp (°C)</div>
<div class="a t" style="top:145.69px;font-size:11px;color:#000;letter-spacing:-0.1px;left:935px;">Max</div>
<div class="a" style="left:958px;top:141px;width:47px;height:20px;background:#fff;border:1px solid #a2a6ae;box-sizing:border-box"></div>
<div class="a" style="left:988px;top:143px;width:1px;height:16px;background:#a2a6ae"></div>
<div class="a" style="left:1002px;top:143px;width:1px;height:16px;background:#a2a6ae"></div>
<div class="a" style="left:989px;top:143px;width:13px;height:7px;background:linear-gradient(#f6f6f6,#e6e6e6)"></div>
<div class="a" style="left:989px;top:150px;width:13px;height:1px;background:#b4b4b4"></div>
<div class="a" style="left:989px;top:151px;width:13px;height:7px;background:linear-gradient(#f6f6f6,#e6e6e6)"></div>
<div class="a" style="left:988px;top:158px;width:15px;height:1px;background:#a2a6ae"></div>
<svg style="left:989px;top:143px" width="13" height="15" viewBox="0 0 13 15"><path d="M3.5 5.5L6.5 2.5L9.5 5.5Z" fill="#5262b8"/><path d="M3.5 10L6.5 13L9.5 10Z" fill="#5262b8"/></svg>
<div class="a t" style="top:145.69px;font-size:11px;color:#000;letter-spacing:-0.1px;right:178px;text-align:right;">58</div>
<div class="a t" style="top:166.69px;font-size:11px;color:#000;letter-spacing:-0.1px;left:939px;">Min</div>
<div class="a" style="left:958px;top:162px;width:47px;height:20px;background:#fff;border:1px solid #a2a6ae;box-sizing:border-box"></div>
<div class="a" style="left:988px;top:164px;width:1px;height:16px;background:#a2a6ae"></div>
<div class="a" style="left:1002px;top:164px;width:1px;height:16px;background:#a2a6ae"></div>
<div class="a" style="left:989px;top:164px;width:13px;height:7px;background:linear-gradient(#f6f6f6,#e6e6e6)"></div>
<div class="a" style="left:989px;top:171px;width:13px;height:1px;background:#b4b4b4"></div>
<div class="a" style="left:989px;top:172px;width:13px;height:7px;background:linear-gradient(#f6f6f6,#e6e6e6)"></div>
<div class="a" style="left:988px;top:179px;width:15px;height:1px;background:#a2a6ae"></div>
<svg style="left:989px;top:164px" width="13" height="15" viewBox="0 0 13 15"><path d="M3.5 5.5L6.5 2.5L9.5 5.5Z" fill="#5262b8"/><path d="M3.5 10L6.5 13L9.5 10Z" fill="#5262b8"/></svg>
<div class="a t" style="top:166.69px;font-size:11px;color:#000;letter-spacing:-0.1px;right:178px;text-align:right;">48</div>
<div class="a t" style="top:183.69px;font-size:11px;color:#000;letter-spacing:-0.1px;left:935px;">Inner Melt. temp (°C)</div>
<div class="a t" style="top:201.69px;font-size:11px;color:#000;letter-spacing:-0.1px;left:935px;">Max</div>
<div class="a" style="left:958px;top:197px;width:47px;height:20px;background:#ececec;border:1px solid #a2a6ae;box-sizing:border-box"></div>
<div class="a" style="left:988px;top:199px;width:1px;height:16px;background:#a2a6ae"></div>
<div class="a" style="left:1002px;top:199px;width:1px;height:16px;background:#a2a6ae"></div>
<div class="a" style="left:989px;top:199px;width:13px;height:7px;background:linear-gradient(#f6f6f6,#e6e6e6)"></div>
<div class="a" style="left:989px;top:206px;width:13px;height:1px;background:#b4b4b4"></div>
<div class="a" style="left:989px;top:207px;width:13px;height:7px;background:linear-gradient(#f6f6f6,#e6e6e6)"></div>
<div class="a" style="left:988px;top:214px;width:15px;height:1px;background:#a2a6ae"></div>
<svg style="left:989px;top:199px" width="13" height="15" viewBox="0 0 13 15"><path d="M3.5 5.5L6.5 2.5L9.5 5.5Z" fill="#a0a0a0"/><path d="M3.5 10L6.5 13L9.5 10Z" fill="#a0a0a0"/></svg>
<div class="a t" style="top:201.69px;font-size:11px;color:#8a8a8a;letter-spacing:-0.1px;right:178px;text-align:right;">62</div>
<div class="a t" style="top:222.69px;font-size:11px;color:#000;letter-spacing:-0.1px;left:939px;">Min</div>
<div class="a" style="left:958px;top:218px;width:47px;height:20px;background:#ececec;border:1px solid #a2a6ae;box-sizing:border-box"></div>
<div class="a" style="left:988px;top:220px;width:1px;height:16px;background:#a2a6ae"></div>
<div class="a" style="left:1002px;top:220px;width:1px;height:16px;background:#a2a6ae"></div>
<div class="a" style="left:989px;top:220px;width:13px;height:7px;background:linear-gradient(#f6f6f6,#e6e6e6)"></div>
<div class="a" style="left:989px;top:227px;width:13px;height:1px;background:#b4b4b4"></div>
<div class="a" style="left:989px;top:228px;width:13px;height:7px;background:linear-gradient(#f6f6f6,#e6e6e6)"></div>
<div class="a" style="left:988px;top:235px;width:15px;height:1px;background:#a2a6ae"></div>
<svg style="left:989px;top:220px" width="13" height="15" viewBox="0 0 13 15"><path d="M3.5 5.5L6.5 2.5L9.5 5.5Z" fill="#a0a0a0"/><path d="M3.5 10L6.5 13L9.5 10Z" fill="#a0a0a0"/></svg>
<div class="a t" style="top:222.69px;font-size:11px;color:#8a8a8a;letter-spacing:-0.1px;right:178px;text-align:right;">52</div>
<svg style="left:939px;top:242px" width="7" height="10" viewBox="0 0 7 10"><path d="M1 0.5L5.5 4.5L1 8.5Z" fill="#000"/></svg>
<div class="a t" style="top:241.69px;font-size:11px;color:#000;letter-spacing:-0.1px;left:950px;">Advanced parameters</div>
<div class="a t" style="top:257.69px;font-size:11px;color:#000;letter-spacing:-0.1px;left:935px;">Mode</div>
<div class="a t" style="top:275.69px;font-size:11px;color:#000;letter-spacing:-0.1px;left:956px;">Standard PCR</div>
<div class="a t" style="top:298.69px;font-size:11px;color:#000;letter-spacing:-0.1px;left:956px;">TaqMan</div>
<div class="a t" style="top:321.69px;font-size:11px;color:#000;letter-spacing:-0.1px;left:956px;">Nested PCR</div>
<div class="a t" style="top:344.69px;font-size:11px;color:#000;letter-spacing:-0.1px;left:956px;">Sequencing</div>
<svg style="left:930px;top:270px" width="40" height="100" viewBox="0 0 40 100"><defs><radialGradient id="rg0" cx="0.35" cy="0.3" r="0.8"><stop offset="0" stop-color="#fafafa"/><stop offset="1" stop-color="#c4c8cc"/></radialGradient><radialGradient id="rg1" cx="0.4" cy="0.35" r="0.7"><stop offset="0" stop-color="#8fd0ff"/><stop offset="0.6" stop-color="#1f6fb8"/><stop offset="1" stop-color="#0a3a70"/></radialGradient></defs><circle cx="16" cy="12" r="5.5" fill="url(#rg0)" stroke="#8c8c8c"/><circle cx="16" cy="12" r="3" fill="url(#rg1)"/><circle cx="16" cy="35" r="5.5" fill="url(#rg0)" stroke="#8c8c8c"/><circle cx="16" cy="58" r="5.5" fill="url(#rg0)" stroke="#8c8c8c"/><circle cx="16" cy="81" r="5.5" fill="url(#rg0)" stroke="#8c8c8c"/></svg>
<div class="a" style="left:935px;top:363px;width:126px;height:9px;overflow:hidden"><div style="position:absolute;left:0;top:0;width:124px;height:20px;border:1px solid #707070;border-radius:3px;background:linear-gradient(#f2f2f2,#ebebeb 50%,#dddddd 50%,#cfcfcf)"></div><div class="t" style="position:absolute;left:0;width:126px;text-align:center;top:5px;font-size:11px">Calculate</div></div>
<div class="a" style="left:1141px;top:46px;width:16px;height:326px;background:linear-gradient(90deg,#e8e8e8,#f2f2f2 50%,#e8e8e8)"></div>
<svg style="left:1141px;top:45px" width="16" height="328" viewBox="0 0 16 328">
<defs><linearGradient id="ub" x1="0" x2="1"><stop offset="0" stop-color="#e4f4fc"/><stop offset="0.5" stop-color="#d0ebf8"/><stop offset="0.5" stop-color="#a9dbf6"/><stop offset="1" stop-color="#a0d4f0"/></linearGradient>
<linearGradient id="th2" x1="0" x2="1"><stop offset="0" stop-color="#f4f4f4"/><stop offset="0.5" stop-color="#e6e6e6"/><stop offset="0.5" stop-color="#dadada"/><stop offset="1" stop-color="#c8c8c8"/></linearGradient></defs>
<rect x="0.5" y="1.5" width="14" height="15" rx="2" fill="url(#ub)" stroke="#3c7fb1"/>
<path d="M4 11L7.5 7.5L11 11Z" fill="#1a2a3a"/>
<rect x="0.5" y="18.5" width="14" height="47" rx="2" fill="url(#th2)" stroke="#8e8f8f"/>
<g stroke="#333"><path d="M4.5 38.5H10.5M4.5 41.5H10.5M4.5 44.5H10.5"/></g>
<path d="M4 315L7.5 318.5L11 315Z" fill="#222"/>
</svg>
<svg style="left:857px;top:372px" width="301" height="18" viewBox="0 0 301 18">
<rect x="3.5" y="6.5" width="10" height="3" fill="none" stroke="#777"/>
<path d="M20.5 4.5H25.5L27 6H31.5V14.5H20.5Z" fill="none" stroke="#777"/>
<g stroke="#c4c4c4" fill="none"><path d="M39 7H46M44 5L46.5 7L44 9M39 8V12H46M44 10L46.5 12L44 14"/><path d="M48.5 3V16"/></g>
<text x="275" y="14.5" text-anchor="middle" font-family="Liberation Sans" font-size="14" fill="#8a8a8a" transform="translate(275 0) scale(0.72 1) translate(-275 0)">?</text>
<g fill="#777"><rect x="287" y="4" width="2" height="2"/><rect x="287" y="8" width="2" height="2"/><rect x="287" y="12" width="2" height="2"/><rect x="290" y="4.3" width="8" height="1.4"/><rect x="290" y="8.3" width="8" height="1.4"/><rect x="290" y="12" width="1" height="1"/><path d="M292.5 11.5H297.5L295 14.5Z"/></g>
</svg>
<svg style="left:6px;top:401px" width="19" height="17" viewBox="0 0 19 17">
<rect x="1.5" y="1.5" width="15" height="14" fill="#f8f8f8" stroke="#5a6a7a"/>
<g fill="#8fd08f"><rect x="2" y="2" width="2" height="2"/><rect x="5" y="2" width="5" height="2"/><rect x="11" y="2" width="5" height="2"/><rect x="2" y="5" width="2" height="2"/><rect x="2" y="8" width="2" height="2"/><rect x="2" y="11" width="2" height="2"/></g>
<g fill="#c8c8c8"><rect x="5" y="5" width="5" height="2"/><rect x="11" y="5" width="5" height="2"/></g>
<rect x="7" y="7" width="10" height="1.5" fill="#cc3030"/>
<g fill="#444"><rect x="8" y="9" width="1" height="2"/><rect x="11" y="9" width="1" height="2"/><rect x="14" y="9" width="1" height="2"/><rect x="8" y="12" width="1" height="2"/><rect x="11" y="12" width="1" height="2"/><rect x="14" y="12" width="1" height="2"/></g>
<rect x="7" y="15" width="10" height="2" fill="#3535c8"/>
</svg>
<div class="a t" style="top:403.19px;font-size:11px;color:#000;letter-spacing:-0.1px;left:27px;">* ATP8a1 mRNA p...</div>
<svg style="left:131px;top:405px" width="9" height="9" viewBox="0 0 9 9">
<path d="M0.5 0.5L8.5 8.5M8.5 0.5L0.5 8.5" stroke="#707070" stroke-width="1.6"/></svg>
<div class="a t" style="top:438.69px;font-size:11px;color:#000;letter-spacing:-0.1px;left:24px;">Rows: 16</div>
<div class="a t" style="top:438.69px;font-size:11px;color:#000;letter-spacing:-0.17px;left:109px;">Standard primers for "ATP8a1 mRNA primers"</div>
<div class="a" style="left:604px;top:431px;width:166px;height:20px;background:#fff;border:1px solid #a8acb4;box-sizing:border-box"></div>
<div class="a" style="left:774px;top:431px;width:55px;height:21px;box-sizing:border-box;border:1px solid #707070;border-radius:3px;background:linear-gradient(#f2f2f2,#ebebeb 45%,#dddddd 55%,#cfcfcf)"></div>
<div class="a t" style="top:436.19px;font-size:11px;color:#000;letter-spacing:-0.1px;left:801.5px;transform:translateX(-50%);">Filter</div>
<svg style="left:834px;top:434px" width="15" height="14" viewBox="0 0 15 14">
<path d="M1.5 2.5H13.5M1.5 5.5H13.5" stroke="#444" stroke-width="1.2"/><path d="M3.5 7.5H11.5L7.5 11.5Z" fill="#333"/></svg>
<div class="a" style="left:5px;top:463px;width:828px;height:22px;background:linear-gradient(#ffffff 0,#ffffff 40%,#f4f5f7 45%,#eef0f2)"></div>
<div class="a" style="left:5px;top:485px;width:828px;height:1px;background:#d6d6d6"></div>
<div class="a" style="left:5px;top:486px;width:828px;height:1px;background:#fafafa"></div>
<div class="a" style="left:5px;top:487px;width:828px;height:1px;background:#efefef"></div>
<div class="a" style="left:833px;top:462px;width:18px;height:371px;background:linear-gradient(90deg,#e9e9e9,#f1f1f1 40%,#f1f1f1 70%,#e6e6e6)"></div>
<div class="a" style="left:105px;top:463px;width:1px;height:22px;background:#dcdcdc"></div>
<div class="a" style="left:106px;top:463px;width:1px;height:22px;background:#f8f8f8"></div>
<div class="a" style="left:103px;top:463px;width:1px;height:22px;background:#fbfbfb"></div>
<div class="a" style="left:295px;top:463px;width:1px;height:22px;background:#dcdcdc"></div>
<div class="a" style="left:296px;top:463px;width:1px;height:22px;background:#f8f8f8"></div>
<div class="a" style="left:293px;top:463px;width:1px;height:22px;background:#fbfbfb"></div>
<div class="a" style="left:424px;top:463px;width:1px;height:22px;background:#dcdcdc"></div>
<div class="a" style="left:425px;top:463px;width:1px;height:22px;background:#f8f8f8"></div>
<div class="a" style="left:422px;top:463px;width:1px;height:22px;background:#fbfbfb"></div>
<div class="a" style="left:525px;top:463px;width:1px;height:22px;background:#dcdcdc"></div>
<div class="a" style="left:526px;top:463px;width:1px;height:22px;background:#f8f8f8"></div>
<div class="a" style="left:523px;top:463px;width:1px;height:22px;background:#fbfbfb"></div>
<div class="a" style="left:631px;top:463px;width:1px;height:22px;background:#dcdcdc"></div>
<div class="a" style="left:632px;top:463px;width:1px;height:22px;background:#f8f8f8"></div>
<div class="a" style="left:629px;top:463px;width:1px;height:22px;background:#fbfbfb"></div>
<div class="a" style="left:732px;top:463px;width:1px;height:22px;background:#dcdcdc"></div>
<div class="a" style="left:733px;top:463px;width:1px;height:22px;background:#f8f8f8"></div>
<div class="a" style="left:730px;top:463px;width:1px;height:22px;background:#fbfbfb"></div>
<div class="a" style="left:832px;top:463px;width:1px;height:23px;background:#d8d8d8"></div>
<div class="a t" style="top:470.69px;font-size:11px;color:#000;letter-spacing:-0.1px;left:9px;">Score</div>
<div class="a t" style="top:470.69px;font-size:11px;color:#000;letter-spacing:-0.1px;left:110px;">Sequence</div>
<div class="a t" style="top:470.69px;font-size:11px;color:#000;letter-spacing:-0.1px;left:300px;">Region</div>
<div class="a t" style="top:470.69px;font-size:11px;color:#000;letter-spacing:-0.1px;left:429px;">GC content</div>
<div class="a t" style="top:470.69px;font-size:11px;color:#000;letter-spacing:-0.1px;left:530px;">Melt. temp.</div>
<div class="a t" style="top:470.69px;font-size:11px;color:#000;letter-spacing:-0.1px;left:636px;">Secondary struc...</div>
<div class="a t" style="top:470.69px;font-size:11px;color:#000;letter-spacing:-0.1px;left:737px;">Secondary struc...</div>
<svg style="left:40px;top:474px" width="9" height="8" viewBox="0 0 9 8"><path d="M1 1.5H7.5" stroke="#707070" stroke-width="1"/><path d="M2 2L4.2 5.5L6.5 2" fill="none" stroke="#b0b0b0" stroke-width="0.9"/><path d="M2.3 2.2L3.5 4.5" stroke="#707070" stroke-width="0.9"/></svg>
<div class="a" style="left:5px;top:488px;width:828px;height:120px;background:#ffffff"></div>
<div class="a t" style="top:542.69px;font-size:11px;color:#000;letter-spacing:-0.1px;right:1060px;text-align:right;">42.82</div>
<div class="a t" style="top:542.69px;font-size:11px;color:#000;letter-spacing:-0.1px;left:108px;transform:scaleX(0.884);transform-origin:0 0;">AGATCAGGAGGAAGTGAGAA</div>
<div class="a t" style="top:542.69px;font-size:11px;color:#000;letter-spacing:-0.1px;left:297px;">Fwd  (314, 333)</div>
<div class="a t" style="top:542.69px;font-size:11px;color:#000;letter-spacing:-0.1px;right:640px;text-align:right;">0.45</div>
<div class="a t" style="top:542.69px;font-size:11px;color:#000;letter-spacing:-0.1px;right:534px;text-align:right;">54.47</div>
<div class="a t" style="top:542.69px;font-size:11px;color:#000;letter-spacing:-0.1px;right:433px;text-align:right;">11.00</div>
<div class="a" style="left:5px;top:608px;width:828px;height:120px;background:#efefef"></div>
<div class="a t" style="top:662.69px;font-size:11px;color:#000;letter-spacing:-0.1px;right:1060px;text-align:right;">42.82</div>
<div class="a t" style="top:662.69px;font-size:11px;color:#000;letter-spacing:-0.1px;left:108px;transform:scaleX(0.884);transform-origin:0 0;">GATCAGGAGGAAGTGAGAA</div>
<div class="a t" style="top:662.69px;font-size:11px;color:#000;letter-spacing:-0.1px;left:297px;">Fwd  (315, 333)</div>
<div class="a t" style="top:662.69px;font-size:11px;color:#000;letter-spacing:-0.1px;right:640px;text-align:right;">0.47</div>
<div class="a t" style="top:662.69px;font-size:11px;color:#000;letter-spacing:-0.1px;right:534px;text-align:right;">52.67</div>
<div class="a t" style="top:662.69px;font-size:11px;color:#000;letter-spacing:-0.1px;right:433px;text-align:right;">11.00</div>
<div class="a" style="left:5px;top:728px;width:828px;height:105px;background:#ffffff"></div>
<div class="a t" style="top:782.69px;font-size:11px;color:#000;letter-spacing:-0.1px;right:1060px;text-align:right;">42.82</div>
<div class="a t" style="top:782.69px;font-size:11px;color:#000;letter-spacing:-0.1px;left:108px;transform:scaleX(0.884);transform-origin:0 0;">ATCAGGAGGAAGTGAGAA</div>
<div class="a t" style="top:782.69px;font-size:11px;color:#000;letter-spacing:-0.1px;left:297px;">Fwd  (316, 333)</div>
<div class="a t" style="top:782.69px;font-size:11px;color:#000;letter-spacing:-0.1px;right:640px;text-align:right;">0.44</div>
<div class="a t" style="top:782.69px;font-size:11px;color:#000;letter-spacing:-0.1px;right:534px;text-align:right;">51.44</div>
<div class="a t" style="top:782.69px;font-size:11px;color:#000;letter-spacing:-0.1px;right:433px;text-align:right;">11.00</div>
<div class="a" style="left:105px;top:488px;width:1px;height:345px;background:#d4d4d4"></div>
<div class="a" style="left:295px;top:488px;width:1px;height:345px;background:#d4d4d4"></div>
<div class="a" style="left:424px;top:488px;width:1px;height:345px;background:#d4d4d4"></div>
<div class="a" style="left:525px;top:488px;width:1px;height:345px;background:#d4d4d4"></div>
<div class="a" style="left:631px;top:488px;width:1px;height:345px;background:#d4d4d4"></div>
<div class="a" style="left:732px;top:488px;width:1px;height:345px;background:#d4d4d4"></div>
<div class="a" style="left:733px;top:487px;width:100px;height:120px;overflow:hidden"><svg style="left:0;top:0" width="100" height="130" viewBox="733 487 100 130"><polyline points="798.2,516.7 802.3,528.6 798.2,540.3 784.7,543.9 781.0,553.6 778.5,563.1 785.8,574.5 784.4,586.7 776.1,596.0 764.7,598.6 753.8,593.6 747.2,583.4 747.6,572.0 755.7,561.5 768.8,558.2 772.8,550.1 776.6,541.1 771.2,528.6 775.3,517.1 787.5,512.6" fill="none" stroke="#888" stroke-width="0.8"/><line x1="810.8" y1="504.1" x2="801" y2="513.4" stroke="#777" stroke-width="0.9"/><text x="798.2" y="520.9" text-anchor="middle" font-family="Liberation Sans" font-weight="bold" font-size="12" fill="#b8101a" stroke="#ffffff" stroke-width="2.2" paint-order="stroke" transform="translate(798.2 0) scale(0.76 1) translate(-798.2 0)">A</text><text x="802.3" y="532.8" text-anchor="middle" font-family="Liberation Sans" font-weight="bold" font-size="12" fill="#b8101a" stroke="#ffffff" stroke-width="2.2" paint-order="stroke" transform="translate(802.3 0) scale(0.76 1) translate(-802.3 0)">G</text><text x="798.2" y="544.5" text-anchor="middle" font-family="Liberation Sans" font-weight="bold" font-size="12" fill="#b8101a" stroke="#ffffff" stroke-width="2.2" paint-order="stroke" transform="translate(798.2 0) scale(0.76 1) translate(-798.2 0)">A</text><text x="784.7" y="548.1" text-anchor="middle" font-family="Liberation Sans" font-weight="bold" font-size="12" fill="#58c030" stroke="#ffffff" stroke-width="2.2" paint-order="stroke" transform="translate(784.7 0) scale(0.76 1) translate(-784.7 0)">T</text><text x="781.0" y="557.8" text-anchor="middle" font-family="Liberation Sans" font-weight="bold" font-size="12" fill="#58c030" stroke="#ffffff" stroke-width="2.2" paint-order="stroke" transform="translate(781.0 0) scale(0.76 1) translate(-781.0 0)">C</text><text x="778.5" y="567.3" text-anchor="middle" font-family="Liberation Sans" font-weight="bold" font-size="12" fill="#58c030" stroke="#ffffff" stroke-width="2.2" paint-order="stroke" transform="translate(778.5 0) scale(0.76 1) translate(-778.5 0)">A</text><text x="785.8" y="578.7" text-anchor="middle" font-family="Liberation Sans" font-weight="bold" font-size="12" fill="#b8101a" stroke="#ffffff" stroke-width="2.2" paint-order="stroke" transform="translate(785.8 0) scale(0.76 1) translate(-785.8 0)">G</text><text x="784.4" y="590.9" text-anchor="middle" font-family="Liberation Sans" font-weight="bold" font-size="12" fill="#b8101a" stroke="#ffffff" stroke-width="2.2" paint-order="stroke" transform="translate(784.4 0) scale(0.76 1) translate(-784.4 0)">G</text><text x="776.1" y="600.2" text-anchor="middle" font-family="Liberation Sans" font-weight="bold" font-size="12" fill="#b8101a" stroke="#ffffff" stroke-width="2.2" paint-order="stroke" transform="translate(776.1 0) scale(0.76 1) translate(-776.1 0)">A</text><text x="764.7" y="602.8" text-anchor="middle" font-family="Liberation Sans" font-weight="bold" font-size="12" fill="#b8101a" stroke="#ffffff" stroke-width="2.2" paint-order="stroke" transform="translate(764.7 0) scale(0.76 1) translate(-764.7 0)">G</text><text x="753.8" y="597.8" text-anchor="middle" font-family="Liberation Sans" font-weight="bold" font-size="12" fill="#b8101a" stroke="#ffffff" stroke-width="2.2" paint-order="stroke" transform="translate(753.8 0) scale(0.76 1) translate(-753.8 0)">G</text><text x="747.2" y="587.6" text-anchor="middle" font-family="Liberation Sans" font-weight="bold" font-size="12" fill="#b8101a" stroke="#ffffff" stroke-width="2.2" paint-order="stroke" transform="translate(747.2 0) scale(0.76 1) translate(-747.2 0)">A</text><text x="747.6" y="576.2" text-anchor="middle" font-family="Liberation Sans" font-weight="bold" font-size="12" fill="#b8101a" stroke="#ffffff" stroke-width="2.2" paint-order="stroke" transform="translate(747.6 0) scale(0.76 1) translate(-747.6 0)">A</text><text x="755.7" y="565.7" text-anchor="middle" font-family="Liberation Sans" font-weight="bold" font-size="12" fill="#b8101a" stroke="#ffffff" stroke-width="2.2" paint-order="stroke" transform="translate(755.7 0) scale(0.76 1) translate(-755.7 0)">G</text><text x="768.8" y="562.4" text-anchor="middle" font-family="Liberation Sans" font-weight="bold" font-size="12" fill="#58c030" stroke="#ffffff" stroke-width="2.2" paint-order="stroke" transform="translate(768.8 0) scale(0.76 1) translate(-768.8 0)">T</text><text x="772.8" y="554.3" text-anchor="middle" font-family="Liberation Sans" font-weight="bold" font-size="12" fill="#58c030" stroke="#ffffff" stroke-width="2.2" paint-order="stroke" transform="translate(772.8 0) scale(0.76 1) translate(-772.8 0)">G</text><text x="776.6" y="545.3" text-anchor="middle" font-family="Liberation Sans" font-weight="bold" font-size="12" fill="#58c030" stroke="#ffffff" stroke-width="2.2" paint-order="stroke" transform="translate(776.6 0) scale(0.76 1) translate(-776.6 0)">A</text><text x="771.2" y="532.8" text-anchor="middle" font-family="Liberation Sans" font-weight="bold" font-size="12" fill="#b8101a" stroke="#ffffff" stroke-width="2.2" paint-order="stroke" transform="translate(771.2 0) scale(0.76 1) translate(-771.2 0)">G</text><text x="775.3" y="521.3" text-anchor="middle" font-family="Liberation Sans" font-weight="bold" font-size="12" fill="#b8101a" stroke="#ffffff" stroke-width="2.2" paint-order="stroke" transform="translate(775.3 0) scale(0.76 1) translate(-775.3 0)">A</text><text x="787.5" y="516.8" text-anchor="middle" font-family="Liberation Sans" font-weight="bold" font-size="12" fill="#b8101a" stroke="#ffffff" stroke-width="2.2" paint-order="stroke" transform="translate(787.5 0) scale(0.76 1) translate(-787.5 0)">A</text><text x="818" y="500.0" text-anchor="middle" font-family="Liberation Sans" font-weight="bold" font-size="12.5" fill="#000">1</text></svg></div>
<div class="a" style="left:733px;top:607px;width:100px;height:120px;overflow:hidden"><svg style="left:0;top:0" width="100" height="130" viewBox="733 607 100 130"><polyline points="784.4,637.1 788.8,648.4 781.0,658.7 782.3,669.2 783.4,679.0 795.3,685.5 800.7,697.0 797.4,707.9 788.5,716.0 776.6,717.6 766.5,712.1 761.6,701.0 763.5,688.8 773.6,679.0 772.5,670.0 771.2,661.1 762.4,650.8 763.5,639.1 773.3,632.6" fill="none" stroke="#888" stroke-width="0.8"/><line x1="797.8" y1="623.6" x2="788" y2="632.6" stroke="#777" stroke-width="0.9"/><text x="784.4" y="641.3" text-anchor="middle" font-family="Liberation Sans" font-weight="bold" font-size="12" fill="#b8101a" stroke="#efefef" stroke-width="2.2" paint-order="stroke" transform="translate(784.4 0) scale(0.76 1) translate(-784.4 0)">G</text><text x="788.8" y="652.6" text-anchor="middle" font-family="Liberation Sans" font-weight="bold" font-size="12" fill="#b8101a" stroke="#efefef" stroke-width="2.2" paint-order="stroke" transform="translate(788.8 0) scale(0.76 1) translate(-788.8 0)">A</text><text x="781.0" y="662.9" text-anchor="middle" font-family="Liberation Sans" font-weight="bold" font-size="12" fill="#58c030" stroke="#efefef" stroke-width="2.2" paint-order="stroke" transform="translate(781.0 0) scale(0.76 1) translate(-781.0 0)">T</text><text x="782.3" y="673.4" text-anchor="middle" font-family="Liberation Sans" font-weight="bold" font-size="12" fill="#58c030" stroke="#efefef" stroke-width="2.2" paint-order="stroke" transform="translate(782.3 0) scale(0.76 1) translate(-782.3 0)">C</text><text x="783.4" y="683.2" text-anchor="middle" font-family="Liberation Sans" font-weight="bold" font-size="12" fill="#58c030" stroke="#efefef" stroke-width="2.2" paint-order="stroke" transform="translate(783.4 0) scale(0.76 1) translate(-783.4 0)">A</text><text x="795.3" y="689.7" text-anchor="middle" font-family="Liberation Sans" font-weight="bold" font-size="12" fill="#b8101a" stroke="#efefef" stroke-width="2.2" paint-order="stroke" transform="translate(795.3 0) scale(0.76 1) translate(-795.3 0)">G</text><text x="800.7" y="701.2" text-anchor="middle" font-family="Liberation Sans" font-weight="bold" font-size="12" fill="#b8101a" stroke="#efefef" stroke-width="2.2" paint-order="stroke" transform="translate(800.7 0) scale(0.76 1) translate(-800.7 0)">G</text><text x="797.4" y="712.1" text-anchor="middle" font-family="Liberation Sans" font-weight="bold" font-size="12" fill="#b8101a" stroke="#efefef" stroke-width="2.2" paint-order="stroke" transform="translate(797.4 0) scale(0.76 1) translate(-797.4 0)">A</text><text x="788.5" y="720.2" text-anchor="middle" font-family="Liberation Sans" font-weight="bold" font-size="12" fill="#b8101a" stroke="#efefef" stroke-width="2.2" paint-order="stroke" transform="translate(788.5 0) scale(0.76 1) translate(-788.5 0)">G</text><text x="776.6" y="721.8" text-anchor="middle" font-family="Liberation Sans" font-weight="bold" font-size="12" fill="#b8101a" stroke="#efefef" stroke-width="2.2" paint-order="stroke" transform="translate(776.6 0) scale(0.76 1) translate(-776.6 0)">G</text><text x="766.5" y="716.3" text-anchor="middle" font-family="Liberation Sans" font-weight="bold" font-size="12" fill="#b8101a" stroke="#efefef" stroke-width="2.2" paint-order="stroke" transform="translate(766.5 0) scale(0.76 1) translate(-766.5 0)">A</text><text x="761.6" y="705.2" text-anchor="middle" font-family="Liberation Sans" font-weight="bold" font-size="12" fill="#b8101a" stroke="#efefef" stroke-width="2.2" paint-order="stroke" transform="translate(761.6 0) scale(0.76 1) translate(-761.6 0)">A</text><text x="763.5" y="693.0" text-anchor="middle" font-family="Liberation Sans" font-weight="bold" font-size="12" fill="#b8101a" stroke="#efefef" stroke-width="2.2" paint-order="stroke" transform="translate(763.5 0) scale(0.76 1) translate(-763.5 0)">G</text><text x="773.6" y="683.2" text-anchor="middle" font-family="Liberation Sans" font-weight="bold" font-size="12" fill="#58c030" stroke="#efefef" stroke-width="2.2" paint-order="stroke" transform="translate(773.6 0) scale(0.76 1) translate(-773.6 0)">T</text><text x="772.5" y="674.2" text-anchor="middle" font-family="Liberation Sans" font-weight="bold" font-size="12" fill="#58c030" stroke="#efefef" stroke-width="2.2" paint-order="stroke" transform="translate(772.5 0) scale(0.76 1) translate(-772.5 0)">G</text><text x="771.2" y="665.3" text-anchor="middle" font-family="Liberation Sans" font-weight="bold" font-size="12" fill="#58c030" stroke="#efefef" stroke-width="2.2" paint-order="stroke" transform="translate(771.2 0) scale(0.76 1) translate(-771.2 0)">A</text><text x="762.4" y="655.0" text-anchor="middle" font-family="Liberation Sans" font-weight="bold" font-size="12" fill="#b8101a" stroke="#efefef" stroke-width="2.2" paint-order="stroke" transform="translate(762.4 0) scale(0.76 1) translate(-762.4 0)">G</text><text x="763.5" y="643.3" text-anchor="middle" font-family="Liberation Sans" font-weight="bold" font-size="12" fill="#b8101a" stroke="#efefef" stroke-width="2.2" paint-order="stroke" transform="translate(763.5 0) scale(0.76 1) translate(-763.5 0)">A</text><text x="773.3" y="636.8" text-anchor="middle" font-family="Liberation Sans" font-weight="bold" font-size="12" fill="#b8101a" stroke="#efefef" stroke-width="2.2" paint-order="stroke" transform="translate(773.3 0) scale(0.76 1) translate(-773.3 0)">A</text><text x="804.3" y="619.5" text-anchor="middle" font-family="Liberation Sans" font-weight="bold" font-size="12.5" fill="#000">1</text></svg></div>
<div class="a" style="left:733px;top:727px;width:100px;height:106px;overflow:hidden"><svg style="left:0;top:0" width="100" height="130" viewBox="733 727 100 130"><polyline points="765.5,762.9 768.8,777.4 777.3,785.5 785.8,793.6 801.6,792.0 814.6,797.7 820.5,810.6 818.6,824.9 808.4,832.5 794.5,835.0 781.7,831.7 775.2,817.9 778.2,800.9 769.6,793.6 761.2,785.5 746.6,781.8 742.4,768.5 752.6,758.8" fill="none" stroke="#888" stroke-width="0.8"/><line x1="780.9" y1="747.5" x2="770.4" y2="758" stroke="#777" stroke-width="0.9"/><text x="765.5" y="767.1" text-anchor="middle" font-family="Liberation Sans" font-weight="bold" font-size="12" fill="#b8101a" stroke="#ffffff" stroke-width="2.2" paint-order="stroke" transform="translate(765.5 0) scale(0.76 1) translate(-765.5 0)">A</text><text x="768.8" y="781.6" text-anchor="middle" font-family="Liberation Sans" font-weight="bold" font-size="12" fill="#58c030" stroke="#ffffff" stroke-width="2.2" paint-order="stroke" transform="translate(768.8 0) scale(0.76 1) translate(-768.8 0)">T</text><text x="777.3" y="789.7" text-anchor="middle" font-family="Liberation Sans" font-weight="bold" font-size="12" fill="#58c030" stroke="#ffffff" stroke-width="2.2" paint-order="stroke" transform="translate(777.3 0) scale(0.76 1) translate(-777.3 0)">C</text><text x="785.8" y="797.8" text-anchor="middle" font-family="Liberation Sans" font-weight="bold" font-size="12" fill="#58c030" stroke="#ffffff" stroke-width="2.2" paint-order="stroke" transform="translate(785.8 0) scale(0.76 1) translate(-785.8 0)">A</text><text x="801.6" y="796.2" text-anchor="middle" font-family="Liberation Sans" font-weight="bold" font-size="12" fill="#b8101a" stroke="#ffffff" stroke-width="2.2" paint-order="stroke" transform="translate(801.6 0) scale(0.76 1) translate(-801.6 0)">G</text><text x="814.6" y="801.9" text-anchor="middle" font-family="Liberation Sans" font-weight="bold" font-size="12" fill="#b8101a" stroke="#ffffff" stroke-width="2.2" paint-order="stroke" transform="translate(814.6 0) scale(0.76 1) translate(-814.6 0)">G</text><text x="820.5" y="814.8" text-anchor="middle" font-family="Liberation Sans" font-weight="bold" font-size="12" fill="#b8101a" stroke="#ffffff" stroke-width="2.2" paint-order="stroke" transform="translate(820.5 0) scale(0.76 1) translate(-820.5 0)">A</text><text x="818.6" y="829.1" text-anchor="middle" font-family="Liberation Sans" font-weight="bold" font-size="12" fill="#b8101a" stroke="#ffffff" stroke-width="2.2" paint-order="stroke" transform="translate(818.6 0) scale(0.76 1) translate(-818.6 0)">G</text><text x="808.4" y="836.7" text-anchor="middle" font-family="Liberation Sans" font-weight="bold" font-size="12" fill="#b8101a" stroke="#ffffff" stroke-width="2.2" paint-order="stroke" transform="translate(808.4 0) scale(0.76 1) translate(-808.4 0)">G</text><text x="794.5" y="839.2" text-anchor="middle" font-family="Liberation Sans" font-weight="bold" font-size="12" fill="#b8101a" stroke="#ffffff" stroke-width="2.2" paint-order="stroke" transform="translate(794.5 0) scale(0.76 1) translate(-794.5 0)">A</text><text x="781.7" y="835.9" text-anchor="middle" font-family="Liberation Sans" font-weight="bold" font-size="12" fill="#b8101a" stroke="#ffffff" stroke-width="2.2" paint-order="stroke" transform="translate(781.7 0) scale(0.76 1) translate(-781.7 0)">A</text><text x="775.2" y="822.1" text-anchor="middle" font-family="Liberation Sans" font-weight="bold" font-size="12" fill="#b8101a" stroke="#ffffff" stroke-width="2.2" paint-order="stroke" transform="translate(775.2 0) scale(0.76 1) translate(-775.2 0)">G</text><text x="778.2" y="805.1" text-anchor="middle" font-family="Liberation Sans" font-weight="bold" font-size="12" fill="#58c030" stroke="#ffffff" stroke-width="2.2" paint-order="stroke" transform="translate(778.2 0) scale(0.76 1) translate(-778.2 0)">T</text><text x="769.6" y="797.8" text-anchor="middle" font-family="Liberation Sans" font-weight="bold" font-size="12" fill="#58c030" stroke="#ffffff" stroke-width="2.2" paint-order="stroke" transform="translate(769.6 0) scale(0.76 1) translate(-769.6 0)">G</text><text x="761.2" y="789.7" text-anchor="middle" font-family="Liberation Sans" font-weight="bold" font-size="12" fill="#58c030" stroke="#ffffff" stroke-width="2.2" paint-order="stroke" transform="translate(761.2 0) scale(0.76 1) translate(-761.2 0)">A</text><text x="746.6" y="786.0" text-anchor="middle" font-family="Liberation Sans" font-weight="bold" font-size="12" fill="#b8101a" stroke="#ffffff" stroke-width="2.2" paint-order="stroke" transform="translate(746.6 0) scale(0.76 1) translate(-746.6 0)">G</text><text x="742.4" y="772.7" text-anchor="middle" font-family="Liberation Sans" font-weight="bold" font-size="12" fill="#b8101a" stroke="#ffffff" stroke-width="2.2" paint-order="stroke" transform="translate(742.4 0) scale(0.76 1) translate(-742.4 0)">A</text><text x="752.6" y="763.0" text-anchor="middle" font-family="Liberation Sans" font-weight="bold" font-size="12" fill="#b8101a" stroke="#ffffff" stroke-width="2.2" paint-order="stroke" transform="translate(752.6 0) scale(0.76 1) translate(-752.6 0)">A</text><text x="789" y="741.5" text-anchor="middle" font-family="Liberation Sans" font-weight="bold" font-size="12.5" fill="#000">1</text></svg></div>
<svg style="left:833px;top:487px" width="18" height="346" viewBox="0 0 18 346">
<defs><linearGradient id="th3" x1="0" x2="1"><stop offset="0" stop-color="#f4f4f4"/><stop offset="0.5" stop-color="#e6e6e6"/><stop offset="0.5" stop-color="#dadada"/><stop offset="1" stop-color="#c8c8c8"/></linearGradient></defs>
<path d="M5.5 11L9 7.5L12.5 11Z" fill="#222"/>
<rect x="2.5" y="19.5" width="14" height="52" rx="2" fill="url(#th3)" stroke="#8e8f8f"/>
<g stroke="#333"><path d="M6.5 41.5H12.5M6.5 44.5H12.5M6.5 47.5H12.5"/></g>
<path d="M5 335.5H13L9 339.5Z" fill="#333"/>
</svg>
<svg style="left:4px;top:834px" width="70" height="22" viewBox="0 0 70 22">
<rect x="1.5" y="1.5" width="18" height="18" fill="#c0c0c0" stroke="#3c96f0"/>
<rect x="3" y="3" width="15" height="15" fill="#f0f0f0" stroke="#5a6a7a" stroke-width="0.8"/>
<g fill="#8fd08f"><rect x="3.5" y="4" width="2" height="2"/><rect x="7" y="4" width="4" height="2"/><rect x="12" y="4" width="5" height="2"/><rect x="3.5" y="7" width="2" height="2"/><rect x="3.5" y="10" width="2" height="2"/><rect x="3.5" y="13" width="2" height="2"/></g>
<rect x="8" y="9" width="10" height="1.5" fill="#cc3030"/>
<g fill="#444"><rect x="9" y="11" width="1" height="2"/><rect x="12" y="11" width="1" height="2"/><rect x="15" y="11" width="1" height="2"/><rect x="9" y="14" width="1" height="2"/><rect x="12" y="14" width="1" height="2"/><rect x="15" y="14" width="1" height="2"/></g>
<rect x="8" y="16" width="10" height="2" fill="#3535c8"/>
<rect x="25.5" y="4.5" width="12" height="14" fill="#f4f8ff" stroke="#3a70b8"/>
<circle cx="31.5" cy="10.5" r="3.5" fill="none" stroke="#3a70b8" stroke-width="1.1"/><path d="M31.5 8.5V10.5H33.5" fill="none" stroke="#3a70b8"/>
<path d="M28 15.5H35" stroke="#3a70b8"/>
<path d="M45.5 4.5H52.5L55.5 7.5V18.5H45.5Z" fill="#eef4fb" stroke="#3a70b8"/>
<path d="M48 12L51 17L57 4" fill="none" stroke="#1a8a2a" stroke-width="1.8"/>
</svg>
<div class="a" style="left:857px;top:422px;width:301px;height:20px;background:#f0f0f0"></div>
<div class="a" style="left:863px;top:425px;width:2px;height:13px;background:#333"></div>
<svg style="left:866px;top:427px" width="8" height="12" viewBox="0 0 8 12"><path d="M1 0.5L6.5 5.5L1 10.5Z" fill="#444"/></svg>
<div class="a t" style="top:426.69px;font-size:11px;color:#333;letter-spacing:-0.1px;left:878px;">Primer Table Settings</div>
<div class="a" style="left:857px;top:442px;width:300px;height:4px;background:#dcdcdc"></div>
<div class="a" style="left:857px;top:446px;width:300px;height:16px;background:#dcdcdc"></div>
<div class="a" style="left:857px;top:445px;width:300px;height:1px;background:#b8b8b8"></div>
<div class="a" style="left:858px;top:446px;width:102px;height:16px;background:#efefef"></div>
<div class="a" style="left:960px;top:446px;width:1px;height:16px;background:#c8c8c8"></div>
<div class="a" style="left:857px;top:462px;width:299px;height:1px;background:#e2e2e2"></div>
<div class="a t" style="top:447.69px;font-size:11px;color:#000;letter-spacing:-0.1px;left:866px;">Column width</div>
<svg style="left:1141px;top:452px" width="14" height="5" viewBox="0 0 14 5"><rect x="1.5" y="0.5" width="11" height="3" fill="#f4f4f4" stroke="#777"/></svg>
<div class="a" style="left:1156px;top:446px;width:1px;height:43px;background:#a8a8a8"></div>
<div class="a" style="left:857px;top:488px;width:300px;height:1px;background:#a8a8a8"></div>
<div class="a" style="left:857px;top:489px;width:300px;height:4px;background:#dcdcdc"></div>
<div class="a" style="left:970px;top:465px;width:73px;height:20px;box-sizing:border-box;border:1px solid #9a9a9a;border-radius:2px;background:linear-gradient(#f2f2f2,#ebebeb 45%,#dddddd 55%,#cfcfcf)"></div>
<div class="a t" style="top:469.69px;font-size:11px;color:#000;letter-spacing:-0.1px;left:974px;">Automatic</div>
<svg style="left:1029px;top:475px" width="9" height="6" viewBox="0 0 9 6"><path d="M0.5 0.5H7.5L4 4.5Z" fill="#111"/></svg>
<div class="a" style="left:857px;top:493px;width:300px;height:16px;background:#dcdcdc"></div>
<div class="a" style="left:857px;top:492px;width:300px;height:1px;background:#b8b8b8"></div>
<div class="a" style="left:858px;top:493px;width:102px;height:16px;background:#efefef"></div>
<div class="a" style="left:960px;top:493px;width:1px;height:16px;background:#c8c8c8"></div>
<div class="a" style="left:857px;top:509px;width:299px;height:1px;background:#e2e2e2"></div>
<div class="a t" style="top:494.69px;font-size:11px;color:#000;letter-spacing:-0.1px;left:866px;">Show column</div>
<svg style="left:1141px;top:499px" width="14" height="5" viewBox="0 0 14 5"><rect x="1.5" y="0.5" width="11" height="3" fill="#f4f4f4" stroke="#777"/></svg>
<div class="a" style="left:1156px;top:493px;width:1px;height:299px;background:#a8a8a8"></div>
<div class="a" style="left:857px;top:791px;width:300px;height:1px;background:#a8a8a8"></div>
<div class="a" style="left:857px;top:792px;width:300px;height:46px;background:#dcdcdc"></div>
<div class="a t" style="top:517.69px;font-size:11px;color:#000;letter-spacing:-0.1px;left:950px;">Score</div>
<div class="a t" style="top:540.69px;font-size:11px;color:#000;letter-spacing:-0.1px;left:950px;">Sequence</div>
<div class="a t" style="top:563.69px;font-size:11px;color:#000;letter-spacing:-0.1px;left:950px;">Region</div>
<div class="a t" style="top:586.69px;font-size:11px;color:#000;letter-spacing:-0.1px;left:950px;">Self annealing</div>
<div class="a t" style="top:609.69px;font-size:11px;color:#000;letter-spacing:-0.1px;left:950px;">Self annealing alignment</div>
<div class="a t" style="top:632.69px;font-size:11px;color:#000;letter-spacing:-0.1px;left:950px;">Self end-annealing</div>
<div class="a t" style="top:655.69px;font-size:11px;color:#000;letter-spacing:-0.1px;left:950px;">GC content</div>
<div class="a t" style="top:678.69px;font-size:11px;color:#000;letter-spacing:-0.1px;left:950px;">Melt. temp.</div>
<div class="a t" style="top:701.69px;font-size:11px;color:#000;letter-spacing:-0.1px;left:950px;">Secondary structure score</div>
<div class="a t" style="top:724.69px;font-size:11px;color:#000;letter-spacing:-0.1px;left:950px;">Secondary structure</div>
<svg style="left:930px;top:510px" width="20" height="240" viewBox="0 0 20 240"><defs><linearGradient id="cbg" x1="0" y1="0" x2="1" y2="1"><stop offset="0" stop-color="#d8d8d8"/><stop offset="1" stop-color="#fafafa"/></linearGradient></defs><rect x="4.5" y="7.5" width="12" height="12" fill="url(#cbg)" stroke="#8c8c8c"/><path d="M7 13.5L9.5 17.5L14 9.5" fill="none" stroke="#3a4ea8" stroke-width="1.6"/><rect x="4.5" y="30.5" width="12" height="12" fill="url(#cbg)" stroke="#8c8c8c"/><path d="M7 36.5L9.5 40.5L14 32.5" fill="none" stroke="#3a4ea8" stroke-width="1.6"/><rect x="4.5" y="53.5" width="12" height="12" fill="url(#cbg)" stroke="#8c8c8c"/><path d="M7 59.5L9.5 63.5L14 55.5" fill="none" stroke="#3a4ea8" stroke-width="1.6"/><rect x="4.5" y="76.5" width="12" height="12" fill="url(#cbg)" stroke="#8c8c8c"/><rect x="4.5" y="99.5" width="12" height="12" fill="url(#cbg)" stroke="#8c8c8c"/><rect x="4.5" y="122.5" width="12" height="12" fill="url(#cbg)" stroke="#8c8c8c"/><rect x="4.5" y="145.5" width="12" height="12" fill="url(#cbg)" stroke="#8c8c8c"/><path d="M7 151.5L9.5 155.5L14 147.5" fill="none" stroke="#3a4ea8" stroke-width="1.6"/><rect x="4.5" y="168.5" width="12" height="12" fill="url(#cbg)" stroke="#8c8c8c"/><path d="M7 174.5L9.5 178.5L14 170.5" fill="none" stroke="#3a4ea8" stroke-width="1.6"/><rect x="4.5" y="191.5" width="12" height="12" fill="url(#cbg)" stroke="#8c8c8c"/><path d="M7 197.5L9.5 201.5L14 193.5" fill="none" stroke="#3a4ea8" stroke-width="1.6"/><rect x="4.5" y="214.5" width="12" height="12" fill="url(#cbg)" stroke="#8c8c8c"/><path d="M7 220.5L9.5 224.5L14 216.5" fill="none" stroke="#3a4ea8" stroke-width="1.6"/></svg>
<div class="a" style="left:929px;top:743px;width:155px;height:21px;box-sizing:border-box;border:1px solid #707070;border-radius:3px;background:linear-gradient(#f2f2f2,#ebebeb 45%,#dddddd 55%,#cfcfcf)"></div>
<div class="a t" style="top:747.69px;font-size:11px;color:#000;letter-spacing:-0.1px;left:1006px;transform:translateX(-50%);">Select All</div>
<div class="a" style="left:929px;top:766px;width:155px;height:21px;box-sizing:border-box;border:1px solid #707070;border-radius:3px;background:linear-gradient(#f2f2f2,#ebebeb 45%,#dddddd 55%,#cfcfcf)"></div>
<div class="a t" style="top:770.69px;font-size:11px;color:#000;letter-spacing:-0.1px;left:1006px;transform:translateX(-50%);">Deselect All</div>
<svg style="left:857px;top:838px" width="301" height="18" viewBox="0 0 301 18">
<rect x="3.5" y="6.5" width="10" height="3" fill="none" stroke="#777"/>
<path d="M20.5 4.5H25.5L27 6H31.5V14.5H20.5Z" fill="none" stroke="#777"/>
<g stroke="#c4c4c4" fill="none"><path d="M39 7H46M44 5L46.5 7L44 9M39 8V12H46M44 10L46.5 12L44 14"/><path d="M48.5 3V16"/></g>
<text x="275" y="14.5" text-anchor="middle" font-family="Liberation Sans" font-size="14" fill="#8a8a8a" transform="translate(275 0) scale(0.72 1) translate(-275 0)">?</text>
<g fill="#777"><rect x="287" y="4" width="2" height="2"/><rect x="287" y="8" width="2" height="2"/><rect x="287" y="12" width="2" height="2"/><rect x="290" y="4.3" width="8" height="1.4"/><rect x="290" y="8.3" width="8" height="1.4"/><rect x="290" y="12" width="1" height="1"/><path d="M292.5 11.5H297.5L295 14.5Z"/></g>
</svg>
</body></html>
